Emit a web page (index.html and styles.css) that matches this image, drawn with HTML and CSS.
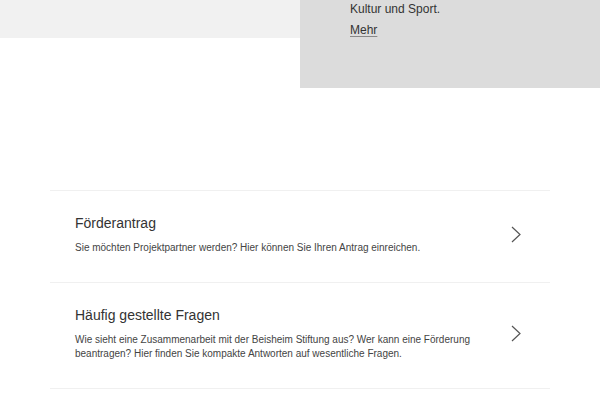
FILE: index.html
```html
<!doctype html>
<html lang="de">
<head>
    <meta charset="UTF-8">
    <meta name="viewport" content="width=device-width, initial-scale=1.0">
    <title>Beisheim Stiftung – Förderung</title>
    <link rel="stylesheet" href="styles.css">
</head>
<body>
    <div class="hero">
        <div class="hero-band"></div>
        <div class="hero-box">
            <p>Kultur und Sport.</p>
            <a href="#" class="more">Mehr</a>
        </div>
    </div>

    <ul class="links">
        <li>
            <a href="#" class="link-row">
                <div class="link-text">
                    <h3>Förderantrag</h3>
                    <p>Sie möchten Projektpartner werden? Hier können Sie Ihren Antrag einreichen.</p>
                </div>
                <svg class="chevron" width="10" height="17" viewBox="0 0 10 17"><polyline points="1,1 9,8.5 1,16" fill="none" stroke="#555" stroke-width="1.2"/></svg>
            </a>
        </li>
        <li>
            <a href="#" class="link-row">
                <div class="link-text">
                    <h3>Häufig gestellte Fragen</h3>
                    <p>Wie sieht eine Zusammenarbeit mit der Beisheim Stiftung aus? Wer kann eine Förderung beantragen? Hier finden Sie kompakte Antworten auf wesentliche Fragen.</p>
                </div>
                <svg class="chevron" width="10" height="17" viewBox="0 0 10 17"><polyline points="1,1 9,8.5 1,16" fill="none" stroke="#555" stroke-width="1.2"/></svg>
            </a>
        </li>
    </ul>
</body>
</html>
```

FILE: styles.css
```css
* {
    margin: 0;
    padding: 0;
    box-sizing: border-box;
}
body {
    font-family: "Liberation Sans", Arial, sans-serif;
    background: #fff;
    color: #333;
}
.hero {
    display: flex;
    align-items: flex-start;
}
.hero-band {
    width: 300px;
    height: 38px;
    background: #f1f1f1;
}
.hero-box {
    width: 300px;
    height: 88px;
    background: #dcdcdc;
    padding-left: 50px;
    font-size: 12px;
    line-height: 19px;
}
.more {
    display: inline-block;
    margin-top: 2px;
    color: #333;
    text-decoration: underline;
    text-decoration-color: #888;
    text-underline-offset: 2px;
}
.links {
    list-style: none;
    margin: 102px 50px 0;
    border-top: 1px solid #f0f0f0;
}
.links li {
    border-bottom: 1px solid #f0f0f0;
}
.link-row {
    display: flex;
    align-items: center;
    justify-content: space-between;
    padding: 22px 29px 27px 25px;
    color: inherit;
    text-decoration: none;
}
.link-text h3 {
    font-size: 14px;
    font-weight: normal;
    line-height: 20px;
    color: #333;
    margin-bottom: 8px;
}
.link-text p {
    font-size: 10px;
    line-height: 14px;
    color: #444;
    max-width: 400px;
}
.chevron {
    flex-shrink: 0;
}
```
